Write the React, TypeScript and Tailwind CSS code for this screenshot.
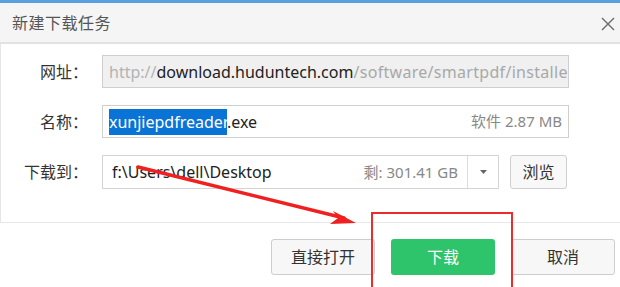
const FONT = "font-['Noto_Sans','Noto_Sans_CJK_SC',sans-serif]"

function Label({ text }: { text: string }) {
  return (
    <div className="w-[88px] shrink-0 text-right text-[16px] text-[#333] pr-[1px]">{text}</div>
  )
}

export default function App() {
  return (
    <div className={`relative w-[620px] h-[287px] overflow-hidden bg-white ${FONT}`}>
      {/* top accent */}
      <div className="h-[3px] bg-[#5a9ee0]" />

      {/* Title bar */}
      <div className="h-[41px] bg-[#f5f5f5] border-b-2 border-[#e2e2e2] flex items-center justify-between pl-[12px] pr-[5px]">
        <span className="text-[16px] text-[#555] tracking-[0.5px]">新建下载任务</span>
        <svg width="14" height="14" viewBox="0 0 14 14" className="mt-[2px]">
          <path d="M1 1L13 13M13 1L1 13" stroke="#6a6a6a" strokeWidth="1.4" />
        </svg>
      </div>

      {/* Form */}
      <div className="border-l border-[#e6e6e6] border-b border-b-[#e8e8e8] pt-[11px] pb-[33px] flex flex-col gap-[17px]">
        <div className="flex items-center gap-[13px] h-[33px]">
          <Label text="网址：" />
          <div className="w-[467px] h-full bg-[#f0f0f0] border border-[#cfcfcf] flex items-center px-[6px] overflow-hidden whitespace-nowrap text-[16px]">
            <span className="text-[#b3b3b3]">http://</span>
            <span className="text-[#222]">download.huduntech.com</span>
            <span className="text-[#a8a8a8] tracking-[0.3px]">/software/smartpdf/installe</span>
          </div>
        </div>

        <div className="flex items-center gap-[13px] h-[33px]">
          <Label text="名称：" />
          <div className="w-[467px] h-full bg-white border border-[#cfcfcf] flex items-center justify-between px-[6px] whitespace-nowrap text-[16px]">
            <span className="text-[#222]">
              <span className="bg-[#0a74d6] text-white py-[2px]">xunjiepdfreader</span>.exe
            </span>
            <span className="text-[15px] text-[#888]">软件 2.87 MB</span>
          </div>
        </div>

        <div className="flex items-center gap-[13px] h-[34px]">
          <Label text="下载到：" />
          <div className="w-[397px] h-full bg-white border border-[#d4d4d4] flex items-center">
            <div className="flex-1 flex items-center justify-between px-[9px] whitespace-nowrap text-[16px]">
              <span className="text-[#222]">f:\Users\dell\Desktop</span>
              <span className="text-[15px] text-[#888]">剩: 301.41 GB</span>
            </div>
            <div className="w-[31px] h-full border-l border-[#dcdcdc] flex items-center justify-center">
              <svg width="7" height="4" viewBox="0 0 7 4"><path d="M0 0h7L3.5 4z" fill="#666" /></svg>
            </div>
          </div>
          <button className="ml-[-2px] w-[57px] h-full bg-[#f8f8f8] border border-[#d0d0d0] rounded-[3px] text-[16px] text-[#333]">
            浏览
          </button>
        </div>
      </div>

      {/* Footer */}
      <div className="flex justify-end gap-[16px] pt-[16px] pr-[5px]">
        <button className="w-[104px] h-[36px] bg-[#f7f7f7] border border-[#cdcdcd] rounded-[3px] text-[16px] text-[#333]">直接打开</button>
        <button className="w-[104px] h-[36px] bg-[#2ec46b] rounded-[3px] text-[16px] text-white">下载</button>
        <button className="w-[104px] h-[36px] bg-[#f7f7f7] border border-[#cdcdcd] rounded-[3px] text-[16px] text-[#333]">取消</button>
      </div>

      {/* Annotation overlay */}
      <div className="absolute left-[371px] top-[212px] w-[142px] h-[90px] border-2 border-[#ee2b2b]" />
      <svg className="absolute left-0 top-0 pointer-events-none" width="620" height="287">
        <line x1="138" y1="167" x2="344" y2="218" stroke="#f02020" strokeWidth="3.5" strokeLinecap="round" />
        <path d="M356 223 L333 211 L338 218 L330 224 Z" fill="#f02020" />
      </svg>
    </div>
  )
}
